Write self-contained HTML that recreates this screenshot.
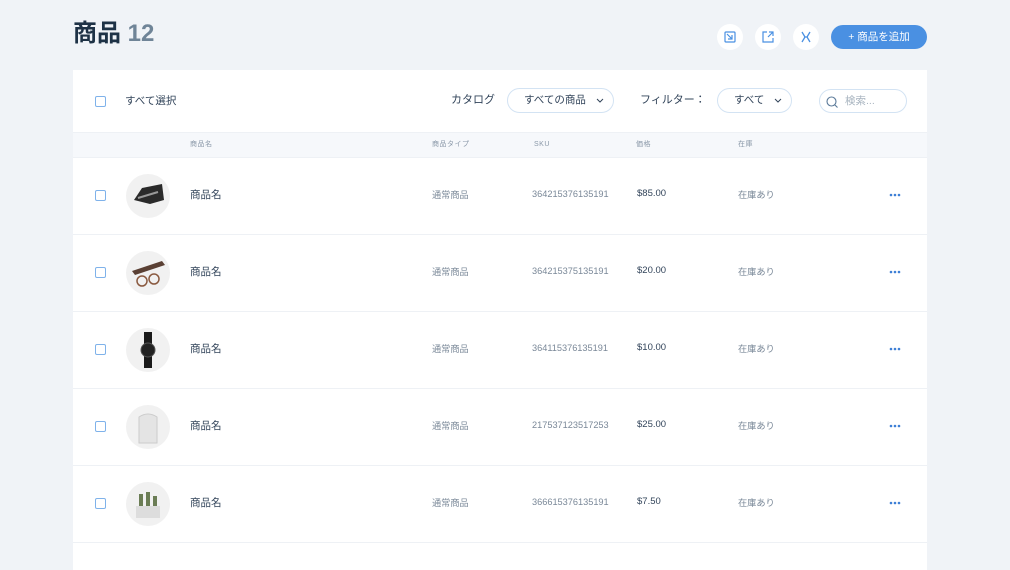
<!DOCTYPE html>
<html><head><meta charset="utf-8"><style>
*{margin:0;padding:0;box-sizing:border-box}
body{width:1010px;height:554px;overflow:hidden;background:#f0f3f7;font-family:"Liberation Sans","Noto Sans CJK JP",sans-serif;position:relative;color:#32445a}
.a{position:absolute}
h1{position:absolute;left:73px;top:19px;font-size:24px;line-height:30px;font-weight:bold;color:#1e3246;white-space:nowrap}
h1 span{color:#6f8497}
.ib{position:absolute;top:24px;width:26px;height:26px;border-radius:50%;background:#fff}
.btn{position:absolute;left:831px;top:25px;width:96px;height:24px;border-radius:12px;background:#4a90e2;color:#fff;font-size:10.5px;line-height:24px;text-align:center}
.card{position:absolute;left:73px;top:70px;width:854px;height:500px;background:#fff}
.cb{position:absolute;width:11px;height:11px;border:1px solid #7fb2ea;border-radius:2px}
.pill{position:absolute;height:25px;border:1px solid #d3e3f3;border-radius:13px;font-size:10.5px;line-height:23px;color:#32445a;white-space:nowrap}
.pill svg.ch{position:absolute;top:9px}
.t{position:absolute;font-size:10.5px;line-height:12px;white-space:nowrap}
.g{color:#7a8898;font-size:9.2px}
.hd{position:absolute;left:0;top:62px;width:854px;height:26px;background:#f6f8fb;border-top:1px solid #eef1f5;border-bottom:1px solid #eef1f5}
.hd span{position:absolute;top:7px;font-size:7px;line-height:10px;color:#8a98a8;letter-spacing:.5px}
.row{position:absolute;left:0;width:854px;height:77px;border-bottom:1px solid #eef1f5}
.row .th{position:absolute;left:53px;top:16px;width:44px;height:44px;border-radius:50%;background:#f1f1f1;overflow:hidden}
.dots{position:absolute;left:816px;top:35px}
.dots svg{display:block}
</style></head><body>
<h1>商品 <span>12</span></h1>
<div class="ib" style="left:717px"><svg width="26" height="26"><rect x="8" y="8" width="10" height="10" rx="1" fill="none" stroke="#4a90e2" stroke-width="1.2"/><path d="M10 10l5 5M15 11v4h-4" fill="none" stroke="#4a90e2" stroke-width="1.2"/></svg></div>
<div class="ib" style="left:755px"><svg width="26" height="26"><path d="M12 8H8v10h10v-4" fill="none" stroke="#4a90e2" stroke-width="1.2"/><path d="M13 13l5-5M14 8h4v4" fill="none" stroke="#4a90e2" stroke-width="1.2"/></svg></div>
<div class="ib" style="left:793px"><svg width="26" height="26"><path d="M9 8l3 5-3 5M17 8l-3 5 3 5M11 13h4" fill="none" stroke="#4a90e2" stroke-width="1.3"/></svg></div>
<div class="btn">+ 商品を追加</div>
<div class="card">
<div class="cb" style="left:22px;top:26px"></div>
<div class="t" style="left:52px;top:25px">すべて選択</div>
<div class="t" style="left:378px;top:24px;font-size:11px">カタログ</div>
<div class="pill" style="left:434px;top:18px;width:107px;padding-left:16px">すべての商品<svg class="ch" style="left:88px" width="8" height="6"><path d="M1 1l3 3 3-3" fill="none" stroke="#32445a"/></svg></div>
<div class="t" style="left:567px;top:24px;font-size:11px">フィルター：</div>
<div class="pill" style="left:644px;top:18px;width:75px;padding-left:16px">すべて<svg class="ch" style="left:56px" width="8" height="6"><path d="M1 1l3 3 3-3" fill="none" stroke="#32445a"/></svg></div>
<div class="pill" style="left:746px;top:19px;width:88px;height:24px;padding-left:25px;color:#a7b3bf">検索...
<svg class="a" style="left:6px;top:6px" width="12" height="12"><circle cx="5.5" cy="5.5" r="4.5" fill="none" stroke="#5b7a99" stroke-width="1.1"/><path d="M9 9l2.5 2.5" stroke="#5b7a99" stroke-width="1.1"/></svg></div>
<div class="hd"><span style="left:117px">商品名</span><span style="left:359px">商品タイプ</span><span style="left:461px">SKU</span><span style="left:563px">価格</span><span style="left:665px">在庫</span></div>
<div class="row" style="top:88px"><div class="cb" style="left:22px;top:32px"></div><div class="th"><svg width="44" height="44"><path d="M8 26l8-12 20-4 2 16-14 4z" fill="#2a2a2a"/><path d="M12 24l20-6" stroke="#999" stroke-width="2"/></svg></div><div class="t" style="left:117px;top:31px">商品名</div><div class="t g" style="left:359px;top:31px">通常商品</div><div class="t g" style="left:459px;top:30px">364215376135191</div><div class="t" style="left:564px;top:30px;font-size:9.5px">$85.00</div><div class="t g" style="left:665px;top:31px">在庫あり</div><div class="dots"><svg width="12" height="4"><circle cx="2" cy="2" r="1.3" fill="#3d7fd6"/><circle cx="6" cy="2" r="1.3" fill="#3d7fd6"/><circle cx="10" cy="2" r="1.3" fill="#3d7fd6"/></svg></div></div>
<div class="row" style="top:165px"><div class="cb" style="left:22px;top:32px"></div><div class="th"><svg width="44" height="44"><path d="M6 20l30-10 3 4-30 10z" fill="#5a4034"/><circle cx="16" cy="30" r="5" fill="none" stroke="#8a5a40" stroke-width="1.5"/><circle cx="28" cy="28" r="5" fill="none" stroke="#8a5a40" stroke-width="1.5"/></svg></div><div class="t" style="left:117px;top:31px">商品名</div><div class="t g" style="left:359px;top:31px">通常商品</div><div class="t g" style="left:459px;top:30px">364215375135191</div><div class="t" style="left:564px;top:30px;font-size:9.5px">$20.00</div><div class="t g" style="left:665px;top:31px">在庫あり</div><div class="dots"><svg width="12" height="4"><circle cx="2" cy="2" r="1.3" fill="#3d7fd6"/><circle cx="6" cy="2" r="1.3" fill="#3d7fd6"/><circle cx="10" cy="2" r="1.3" fill="#3d7fd6"/></svg></div></div>
<div class="row" style="top:242px"><div class="cb" style="left:22px;top:32px"></div><div class="th"><svg width="44" height="44"><rect x="18" y="4" width="8" height="36" fill="#1a1a1a"/><circle cx="22" cy="22" r="7" fill="#222" stroke="#555"/></svg></div><div class="t" style="left:117px;top:31px">商品名</div><div class="t g" style="left:359px;top:31px">通常商品</div><div class="t g" style="left:459px;top:30px">364115376135191</div><div class="t" style="left:564px;top:30px;font-size:9.5px">$10.00</div><div class="t g" style="left:665px;top:31px">在庫あり</div><div class="dots"><svg width="12" height="4"><circle cx="2" cy="2" r="1.3" fill="#3d7fd6"/><circle cx="6" cy="2" r="1.3" fill="#3d7fd6"/><circle cx="10" cy="2" r="1.3" fill="#3d7fd6"/></svg></div></div>
<div class="row" style="top:319px"><div class="cb" style="left:22px;top:32px"></div><div class="th"><svg width="44" height="44"><path d="M13 12q9-6 18 0v26H13z" fill="#e4e4e4" stroke="#ccc"/></svg></div><div class="t" style="left:117px;top:31px">商品名</div><div class="t g" style="left:359px;top:31px">通常商品</div><div class="t g" style="left:459px;top:30px">217537123517253</div><div class="t" style="left:564px;top:30px;font-size:9.5px">$25.00</div><div class="t g" style="left:665px;top:31px">在庫あり</div><div class="dots"><svg width="12" height="4"><circle cx="2" cy="2" r="1.3" fill="#3d7fd6"/><circle cx="6" cy="2" r="1.3" fill="#3d7fd6"/><circle cx="10" cy="2" r="1.3" fill="#3d7fd6"/></svg></div></div>
<div class="row" style="top:396px"><div class="cb" style="left:22px;top:32px"></div><div class="th"><svg width="44" height="44"><rect x="10" y="24" width="24" height="12" fill="#ddd"/><path d="M15 24v-12M22 24v-14M29 24v-10" stroke="#6b7d55" stroke-width="4"/></svg></div><div class="t" style="left:117px;top:31px">商品名</div><div class="t g" style="left:359px;top:31px">通常商品</div><div class="t g" style="left:459px;top:30px">366615376135191</div><div class="t" style="left:564px;top:30px;font-size:9.5px">$7.50</div><div class="t g" style="left:665px;top:31px">在庫あり</div><div class="dots"><svg width="12" height="4"><circle cx="2" cy="2" r="1.3" fill="#3d7fd6"/><circle cx="6" cy="2" r="1.3" fill="#3d7fd6"/><circle cx="10" cy="2" r="1.3" fill="#3d7fd6"/></svg></div></div>
</div>
</body></html>
